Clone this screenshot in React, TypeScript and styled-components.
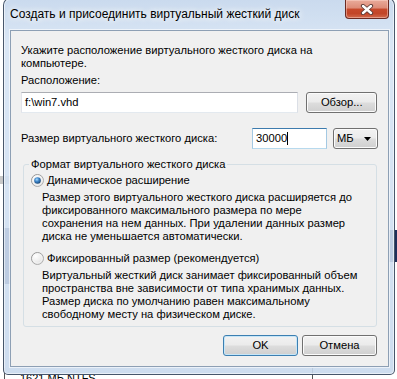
import React from "react";
import styled, { createGlobalStyle } from "styled-components";

const UI_FONT = `"Liberation Sans", Arial, sans-serif`;

const GlobalStyle = createGlobalStyle`
  html, body { margin: 0; padding: 0; background: #ffffff; }
  body { overflow: hidden; }
`;

const Desktop = styled.div`
  position: relative;
  width: 397px;
  height: 379px;
  overflow: hidden;
  background: #ffffff;
  font-family: ${UI_FONT};
  color: #000;
`;

const BackdropBlock = styled.div<{ $x: number; $y: number; $w: number; $h: number; $c: string }>`
  position: absolute;
  left: ${(p) => p.$x}px;
  top: ${(p) => p.$y}px;
  width: ${(p) => p.$w}px;
  height: ${(p) => p.$h}px;
  background: ${(p) => p.$c};
`;

const BackdropText = styled.div`
  position: absolute;
  left: 20px;
  top: 372px;
  font-size: 11px;
  line-height: 13px;
  white-space: nowrap;
`;

const Window = styled.div`
  position: absolute;
  left: 3px;
  top: -2px;
  width: 392px;
  height: 377px;
  box-sizing: border-box;
  border: 1px solid rgba(38, 52, 74, 0.8);
  border-radius: 7px 7px 5px 5px;
  padding: 0 5px 7px 6px;
  display: flex;
  flex-direction: column;
  background: linear-gradient(
    to bottom,
    rgba(196, 214, 236, 0.9) 0%,
    rgba(214, 228, 244, 0.9) 12%,
    rgba(208, 223, 241, 0.9) 60%,
    rgba(200, 217, 237, 0.9) 100%
  );
  box-shadow: inset 0 0 0 1px rgba(255, 255, 255, 0.55);
`;

const TitleBar = styled.div`
  flex: none;
  height: 31px;
  display: flex;
  align-items: flex-start;
`;

const Title = styled.div`
  margin-top: 8px;
  font-size: 12px;
  line-height: 14px;
  white-space: nowrap;
  text-shadow: 0 0 6px #ffffff, 0 0 8px rgba(255, 255, 255, 0.9);
`;

const CloseButton = styled.div`
  margin-left: auto;
  margin-top: 1px;
  width: 44px;
  height: 19px;
  box-sizing: border-box;
  border: 1px solid #6b2a22;
  border-top: none;
  border-radius: 0 0 4px 4px;
  display: flex;
  align-items: center;
  justify-content: center;
  background: linear-gradient(
    to bottom,
    #e9ab9b 0%,
    #dd8b77 45%,
    #c7492c 50%,
    #c24528 75%,
    #d26a4d 100%
  );
  box-shadow: inset 0 0 0 1px rgba(255, 220, 210, 0.45);
`;

const Client = styled.div`
  flex: 1;
  display: flex;
  flex-direction: column;
  background: #f0f0f0;
  border: 1px solid #8d9fb4;
  box-shadow: 0 0 0 1px rgba(255, 255, 255, 0.6);
  padding: 0 11px 0 10px;
  font-size: 11.2px;
  line-height: 13px;
`;

const TextBlock = styled.div<{ $top: number; $left?: number }>`
  margin-top: ${(p) => p.$top}px;
  margin-left: ${(p) => p.$left ?? 0}px;
  white-space: nowrap;
`;

const Row = styled.div<{ $top: number }>`
  margin-top: ${(p) => p.$top}px;
  display: flex;
  align-items: center;
  height: 21px;
`;

const Field = styled.div<{ $w: number; $focused?: boolean }>`
  box-sizing: border-box;
  width: ${(p) => p.$w}px;
  height: 21px;
  padding-left: 3px;
  display: flex;
  align-items: center;
  background: #ffffff;
  border: 1px solid;
  border-color: ${(p) =>
    p.$focused ? "#3d7bad #a4c9e3 #b7d9ed #a4c9e3" : "#abadb3 #dbdfe6 #e3e9ef #e2e3ea"};
`;

const Caret = styled.span`
  display: inline-block;
  width: 1px;
  height: 13px;
  background: #000;
  margin-left: 0;
`;

const buttonFace = `
  box-sizing: border-box;
  height: 21px;
  display: flex;
  align-items: center;
  border-radius: 3px;
  background: linear-gradient(to bottom, #f2f2f2 0%, #ebebeb 48%, #dddddd 52%, #cfcfcf 100%);
`;

const PushButton = styled.div<{ $w: number; $default?: boolean }>`
  ${buttonFace}
  width: ${(p) => p.$w}px;
  justify-content: center;
  border: 1px solid ${(p) => (p.$default ? "#3c7fb1" : "#707070")};
  box-shadow: inset 0 0 0 1px ${(p) => (p.$default ? "#c6e6f8" : "#fbfbfb")};
`;

const ComboBox = styled.div`
  ${buttonFace}
  width: 45px;
  justify-content: space-between;
  padding: 0 6px 0 3px;
  border: 1px solid #707070;
  box-shadow: inset 0 0 0 1px #fbfbfb;
`;

const Group = styled.fieldset`
  margin: 9px 0 0 2px;
  padding: 0 0 5px 0;
  border: 1px solid #d5dfe5;
  border-radius: 3px;
  min-width: 0;
`;

const Legend = styled.legend`
  margin-left: 5px;
  padding: 0 2px;
  line-height: 13px;
  white-space: nowrap;
`;

const RadioRow = styled.div<{ $top: number }>`
  margin-top: ${(p) => p.$top}px;
  margin-left: 7px;
  display: flex;
  align-items: center;
  gap: 3px;
  height: 13px;
  white-space: nowrap;
`;

const ButtonBar = styled.div`
  margin-top: 8px;
  display: flex;
  justify-content: flex-end;
  gap: 4px;
`;

const Radio: React.FC<{ checked?: boolean; id: string }> = ({ checked, id }) => (
  <svg width="13" height="13" viewBox="0 0 13 13">
    <defs>
      <linearGradient id={`${id}-ring`} x1="0" y1="0" x2="1" y2="1">
        <stop offset="0" stopColor="#8d8d8d" />
        <stop offset="1" stopColor="#b9b9b9" />
      </linearGradient>
      <radialGradient id={`${id}-face`} cx="0.35" cy="0.3" r="0.8">
        <stop offset="0" stopColor="#ffffff" />
        <stop offset="0.6" stopColor="#ececec" />
        <stop offset="1" stopColor="#d4d4d4" />
      </radialGradient>
      <radialGradient id={`${id}-dot`} cx="0.4" cy="0.35" r="0.7">
        <stop offset="0" stopColor="#a7dcff" />
        <stop offset="0.45" stopColor="#3f86c9" />
        <stop offset="1" stopColor="#15416f" />
      </radialGradient>
    </defs>
    <circle cx="6.5" cy="6.5" r="6" fill={`url(#${id}-face)`} stroke={`url(#${id}-ring)`} strokeWidth="1" />
    <circle cx="6.5" cy="6.5" r="4.6" fill="none" stroke="#f8f8f8" strokeWidth="0.8" />
    {checked && <circle cx="6.5" cy="6.5" r="3.3" fill={`url(#${id}-dot)`} />}
  </svg>
);

const CloseGlyph = () => (
  <svg width="14" height="11" viewBox="0 0 14 11">
    <path d="M3 2 L11 9 M11 2 L3 9" stroke="#5a3a36" strokeWidth="4.2" strokeLinecap="round" />
    <path d="M3 2 L11 9 M11 2 L3 9" stroke="#ffffff" strokeWidth="2.4" strokeLinecap="round" />
  </svg>
);

const DropArrow = () => (
  <svg width="7" height="4" viewBox="0 0 7 4">
    <path d="M0 0 H7 L3.5 4 Z" fill="#000" />
  </svg>
);

export default function App() {
  return (
    <>
      <GlobalStyle />
      <Desktop>
        <BackdropBlock $x={0} $y={176} $w={10} $h={8} $c="#c8c8c8" />
        <BackdropBlock $x={4} $y={228} $w={6} $h={56} $c="#1f2f5a" />
        <BackdropBlock $x={388} $y={230} $w={9} $h={32} $c="#1f2f5a" />
        <BackdropBlock $x={4} $y={368} $w={1} $h={11} $c="#555" />
        <BackdropBlock $x={312} $y={368} $w={1} $h={11} $c="#555" />
        <BackdropText>1621 МБ NTFS</BackdropText>
        <Window>
          <TitleBar>
            <Title>Создать и присоединить виртуальный жесткий диск</Title>
            <CloseButton>
              <CloseGlyph />
            </CloseButton>
          </TitleBar>
          <Client>
            <TextBlock $top={13}>
              Укажите расположение виртуального жесткого диска на
              <br />
              компьютере.
            </TextBlock>
            <TextBlock $top={4}>Расположение:</TextBlock>
            <Row $top={5}>
              <Field $w={279}>f:\win7.vhd</Field>
              <PushButton $w={71} style={{ marginLeft: 8 }}>
                Обзор...
              </PushButton>
            </Row>
            <Row $top={15}>
              <span>Размер виртуального жесткого диска:</span>
              <Field $w={75} $focused style={{ marginLeft: "auto" }}>
                30000
                <Caret />
              </Field>
              <ComboBox style={{ marginLeft: 6, marginRight: -1 }}>
                <span>МБ</span>
                <DropArrow />
              </ComboBox>
            </Row>
            <Group>
              <Legend>Формат виртуального жесткого диска</Legend>
              <RadioRow $top={3}>
                <Radio id="r1" checked />
                <span>Динамическое расширение</span>
              </RadioRow>
              <TextBlock $top={4} $left={18}>
                Размер этого виртуального жесткого диска расширяется до
                <br />
                фиксированного максимального размера по мере
                <br />
                сохранения на нем данных. При удалении данных размер
                <br />
                диска не уменьшается автоматически.
              </TextBlock>
              <RadioRow $top={9}>
                <Radio id="r2" />
                <span>Фиксированный размер (рекомендуется)</span>
              </RadioRow>
              <TextBlock $top={4} $left={18}>
                Виртуальный жесткий диск занимает фиксированный объем
                <br />
                пространства вне зависимости от типа хранимых данных.
                <br />
                Размер диска по умолчанию равен максимальному
                <br />
                свободному месту на физическом диске.
              </TextBlock>
            </Group>
            <ButtonBar>
              <PushButton $w={75} $default>
                OK
              </PushButton>
              <PushButton $w={75}>Отмена</PushButton>
            </ButtonBar>
          </Client>
        </Window>
      </Desktop>
    </>
  );
}
